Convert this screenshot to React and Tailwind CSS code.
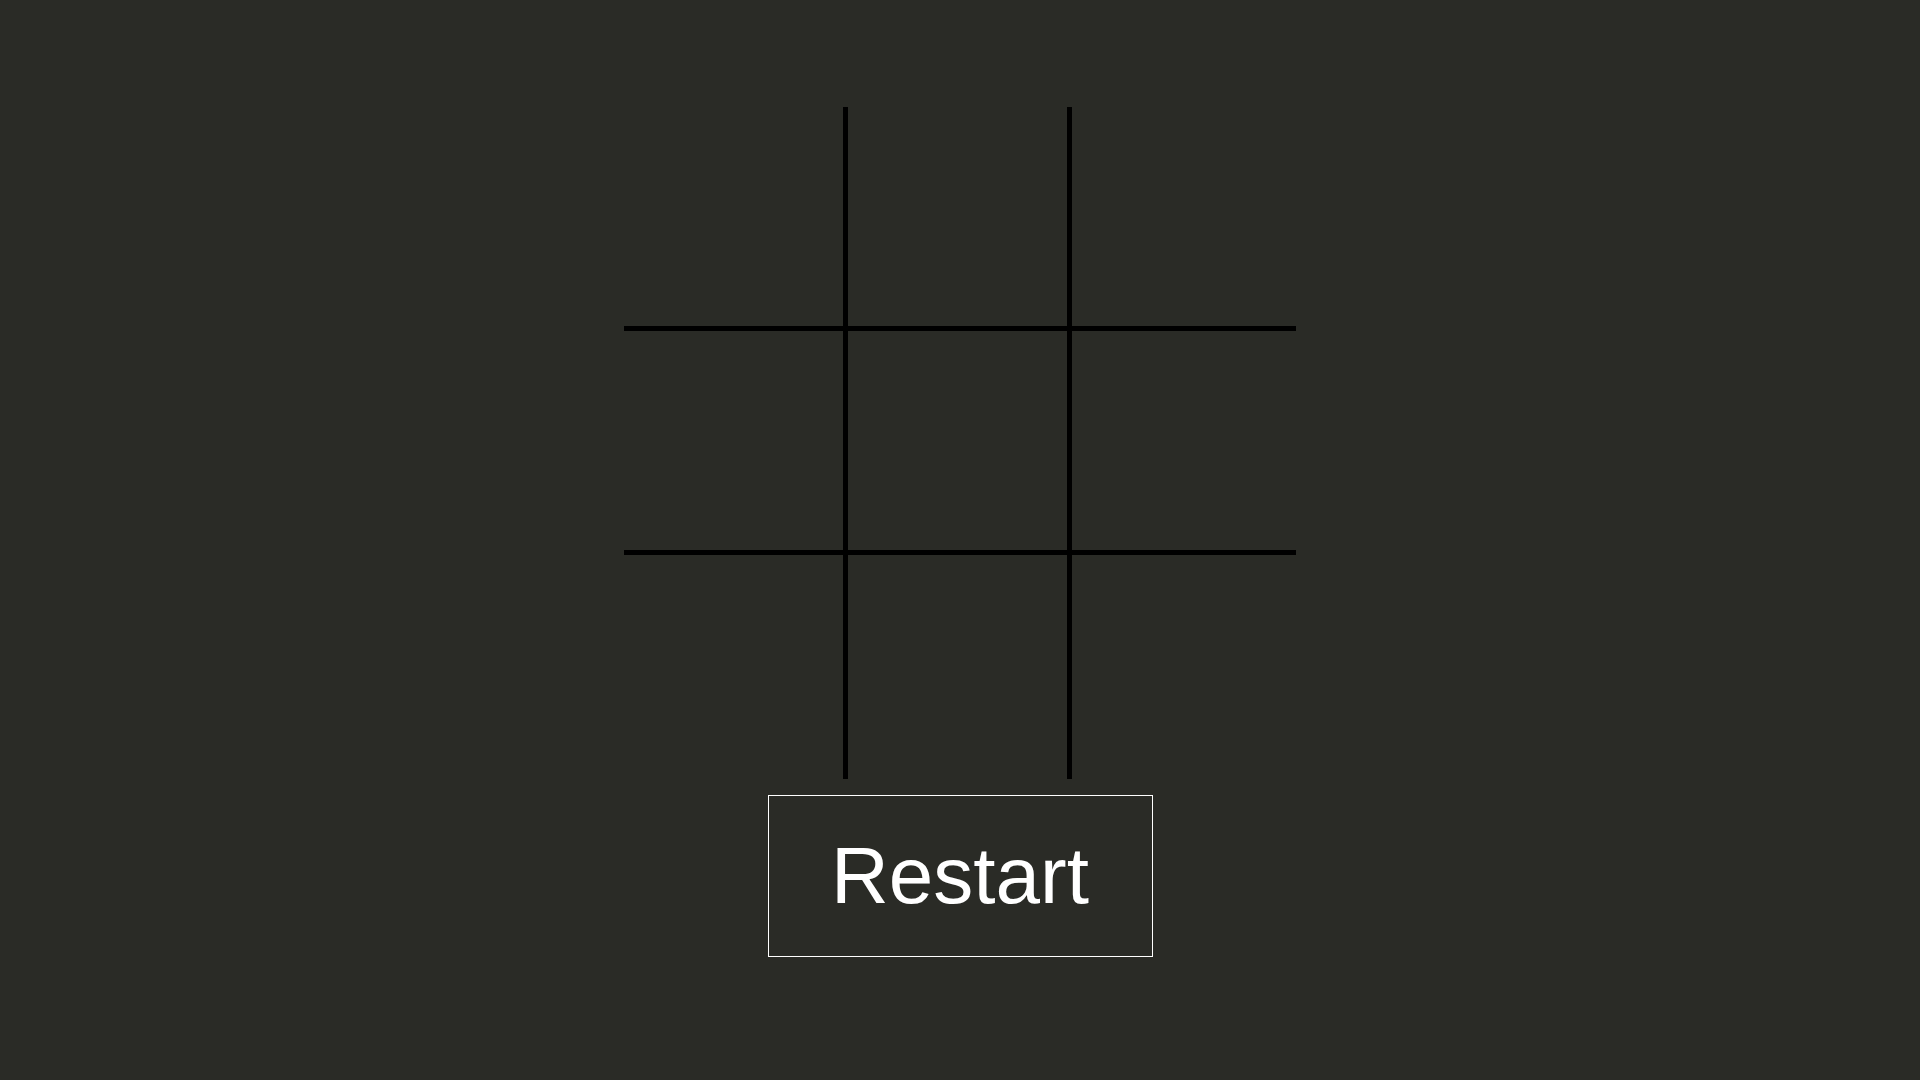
import React, { useState } from 'react';

const Cell = ({ index, value, onClick }) => {
    const col = index % 3;
    const row = Math.floor(index / 3);
    return (
        <div
            onClick={onClick}
            className={
                'w-[224px] h-[224px] flex items-center justify-center text-white text-[120px] cursor-pointer border-black ' +
                (col < 2 ? 'border-r-[5px] ' : '') +
                (row < 2 ? 'border-b-[5px]' : '')
            }
            style={{ fontFamily: '"Liberation Sans", Arial, sans-serif' }}
        >
            {value}
        </div>
    );
};

const App = () => {
    const [board, setBoard] = useState(Array(9).fill(null));
    const [xTurn, setXTurn] = useState(true);

    const play = (i) => {
        if (board[i]) return;
        const next = [...board];
        next[i] = xTurn ? 'X' : 'O';
        setBoard(next);
        setXTurn(!xTurn);
    };

    const restart = () => {
        setBoard(Array(9).fill(null));
        setXTurn(true);
    };

    return (
        <div className="w-full min-h-screen bg-[#2a2b26] flex flex-col items-center pt-[107px]">
            <div className="grid grid-cols-[224px_224px_224px]">
                {board.map((v, i) => (
                    <Cell key={i} index={i} value={v} onClick={() => play(i)} />
                ))}
            </div>

            <button
                onClick={restart}
                className="mt-[16px] w-[385px] h-[162px] border border-white bg-transparent text-white text-[80px] leading-none flex items-center justify-center font-['Liberation_Sans',Arial,sans-serif]"
            >
                Restart
            </button>
        </div>
    );
};

export default App;
